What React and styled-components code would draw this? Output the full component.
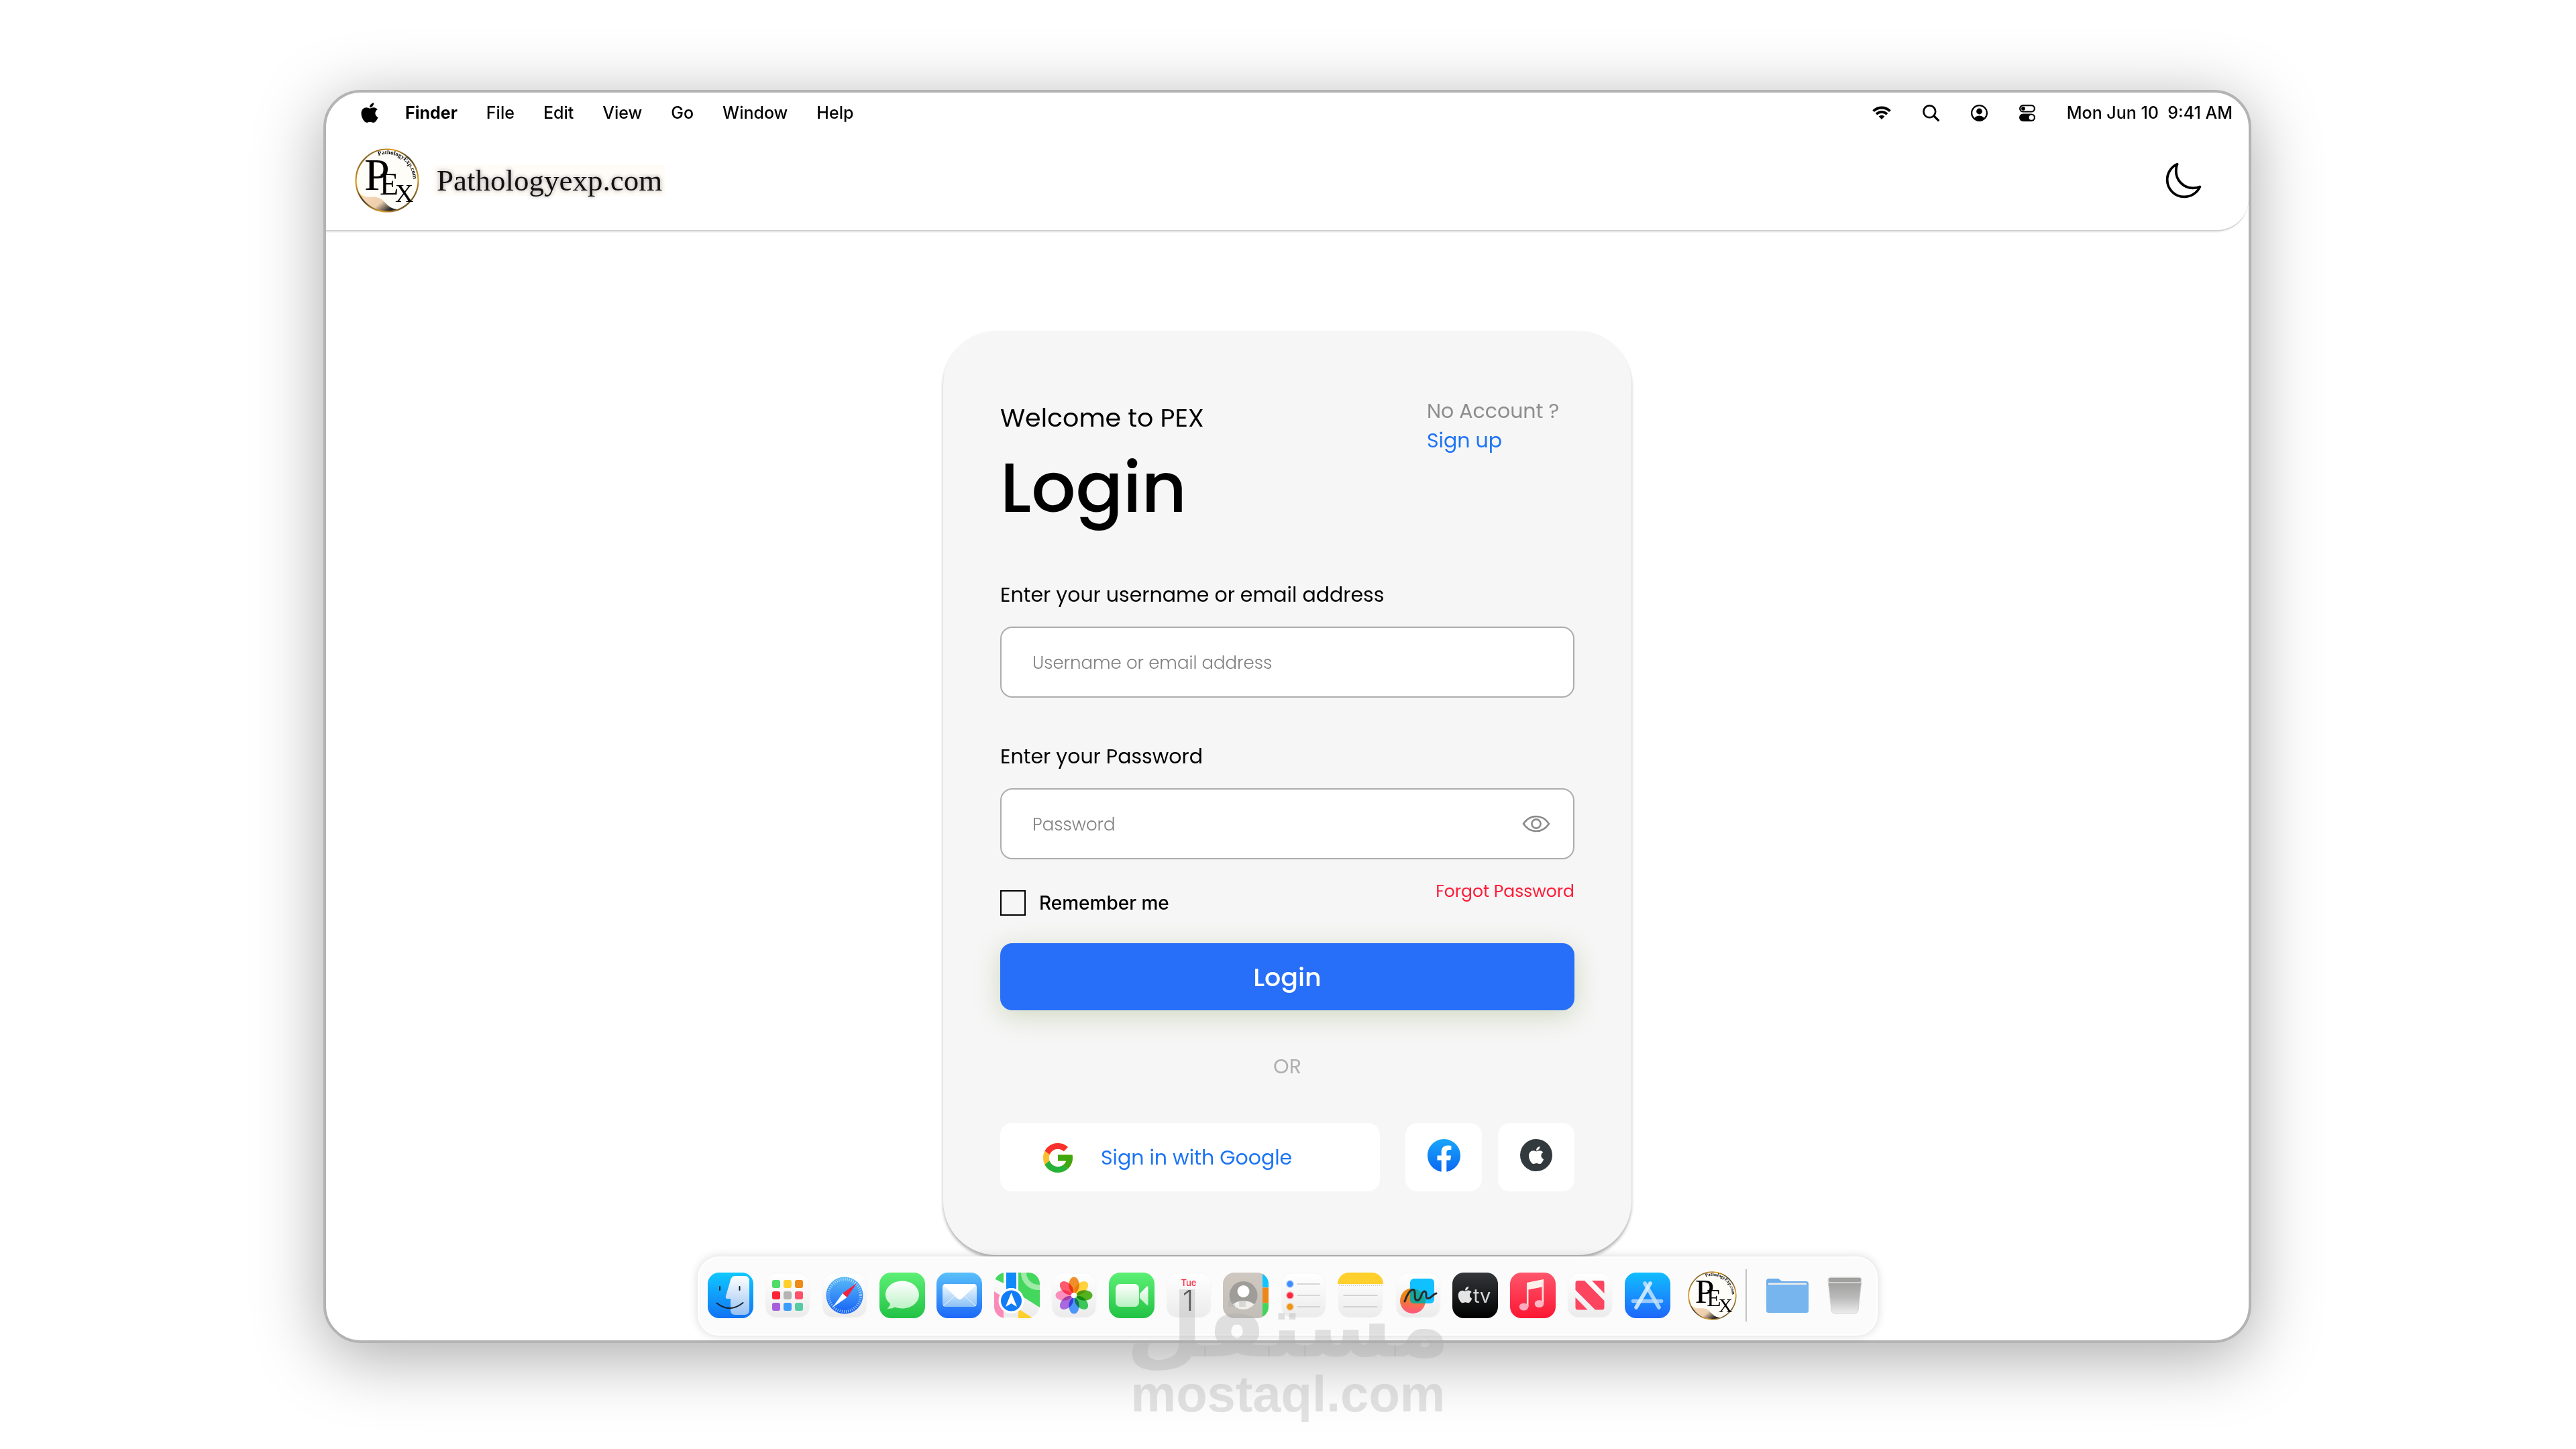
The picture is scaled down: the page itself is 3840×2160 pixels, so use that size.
import { useState } from "react";
import styled, { createGlobalStyle } from "styled-components";
import { FaApple } from "react-icons/fa6";
import { IoMoonOutline } from "react-icons/io5";

const GlobalStyle = createGlobalStyle`
    * {
        box-sizing: border-box;
    }

    body {
        margin: 0;
        background: #fff;
        color: #000;
        font-family: Poppins, Inter, sans-serif;
    }

    button {
        margin: 0;
        padding: 0;
        border: 0;
        background: none;
        color: inherit;
        font: inherit;
        cursor: pointer;
    }

    a {
        text-decoration: none;
    }

    svg {
        display: block;
        flex: none;
    }
`;

const Desktop = styled.div`
    position: relative;
    display: flex;
    min-height: 100vh;
    padding: 134px 484px 158px 482px;
    overflow: hidden;
`;

const Window = styled.div`
    flex: 1;
    display: flex;
    flex-direction: column;
    align-items: center;
    min-width: 0;
    padding-bottom: 7px;
    border: 4px solid #b3b3b3;
    border-radius: 56px;
    background: #fff;
    box-shadow: 0 20px 100px rgba(0, 0, 0, 0.34);
`;

/* menu bar */

const MenuBar = styled.div`
    align-self: stretch;
    display: flex;
    align-items: center;
    height: 62px;
    padding: 0 24px 2px 48px;
    font-family: Inter, sans-serif;
    font-size: 25px;
    font-weight: 500;
    line-height: 32px;
`;

const MenuList = styled.nav`
    display: flex;
    gap: 43px;
    margin-left: 36px;
`;

const MenuItem = styled.button`
    font-weight: ${({ $active }) => ($active ? 700 : 500)};
`;

const StatusList = styled.div`
    display: flex;
    align-items: center;
    gap: 47px;
    margin-left: auto;
`;

const Clock = styled.time`
    white-space: pre;
`;

/* site header */

const Header = styled.header`
    align-self: stretch;
    display: flex;
    align-items: center;
    gap: 22px;
    padding: 21px 67px 26px 43px;
    border-bottom: 2px solid #cfcfcf;
    border-bottom-right-radius: 48px;
    box-shadow: 0 2px 1px rgba(0, 0, 0, 0.04);
`;

const SiteName = styled.a`
    padding: 0 4px;
    background: #fffbf7;
    color: #111;
    font-family: "Liberation Serif", serif;
    font-size: 45px;
    line-height: 46px;
    text-shadow: 0 0 6px rgba(0, 0, 0, 0.4);
`;

const ThemeToggle = styled.button`
    margin-left: auto;
`;

/* login card */

const Main = styled.main`
    flex: 1;
    padding-top: 148px;
`;

const Card = styled.form`
    width: 1026px;
    max-width: 100%;
    padding: 98px 85px 95px;
    border-radius: 80px;
    background: #f6f6f6;
    box-shadow: 0 4px 4px rgba(0, 0, 0, 0.3);
`;

const CardTop = styled.div`
    display: flex;
    justify-content: space-between;
    margin-bottom: 68px;
`;

const Welcome = styled.p`
    margin: 0;
    font-size: 38px;
    line-height: 64px;
`;

const Title = styled.h1`
    margin: 0;
    font-size: 104px;
    font-weight: 500;
    line-height: 144px;
`;

const Aside = styled.div`
    display: flex;
    flex-direction: column;
    width: 220px;
    color: #8d8d8d;
    font-size: 30px;
    line-height: 44px;
`;

const TextLink = styled.a`
    color: #1c74f5;
`;

const Field = styled.div`
    margin-bottom: ${({ $last }) => ($last ? 28 : 68)}px;
`;

const FieldLabel = styled.label`
    display: block;
    margin-bottom: 27px;
    font-size: 30px;
    line-height: 40px;
`;

const FieldBox = styled.div`
    display: flex;
    align-items: center;
    height: 106px;
    padding: 0 34px 0 46px;
    border: 2px solid #adadad;
    border-radius: 18px;
    background: #fff;
`;

const FieldInput = styled.input`
    flex: 1;
    min-width: 0;
    padding: 2px 0 0;
    border: 0;
    outline: 0;
    background: none;
    font: 300 26px/40px Poppins, Inter, sans-serif;

    &::placeholder {
        color: #808080;
        opacity: 1;
    }
`;

const Options = styled.div`
    display: flex;
    justify-content: space-between;
    align-items: flex-start;
    margin-bottom: 41px;
`;

const Remember = styled.label`
    display: flex;
    align-items: center;
    gap: 20px;
    padding-top: 18px;
    font-family: Inter, sans-serif;
    font-size: 28px;
    font-weight: 500;
    line-height: 38px;
`;

const Checkbox = styled.input`
    appearance: none;
    width: 38px;
    height: 38px;
    margin: 0;
    border: 2px solid #000;

    &:checked {
        background: #276ef8;
    }
`;

const ForgotLink = styled.a`
    color: #ff1a36;
    font-size: 25px;
    line-height: 40px;
`;

const SubmitButton = styled.button`
    display: block;
    width: 100%;
    height: 100px;
    border-radius: 18px;
    background: #276ef8;
    box-shadow: 0 8px 38px rgba(119, 147, 65, 0.3);
    color: #fff;
    font-size: 38px;
    font-weight: 500;
`;

const Or = styled.p`
    margin: 64px 0;
    color: #b0b0b0;
    font-size: 30px;
    line-height: 40px;
    text-align: center;
`;

const SocialRow = styled.div`
    display: flex;
    gap: 38px;
`;

const SocialPair = styled.div`
    display: flex;
    gap: 24px;
`;

const SocialButton = styled.button`
    display: flex;
    align-items: center;
    justify-content: center;
    width: 114px;
    height: 102px;
    padding-bottom: 6px;
    border-radius: 18px;
    background: #fff;
`;

const GoogleButton = styled(SocialButton)`
    flex: 1;
    justify-content: flex-start;
    gap: 42px;
    padding: 2px 64px 0;
    color: #1c74f5;
    font-size: 30px;
`;

const AppleBadge = styled.span`
    display: flex;
    align-items: center;
    justify-content: center;
    width: 48px;
    height: 48px;
    border-radius: 50%;
    background: #333a3d;
    color: #fff;
`;

/* dock */

const Dock = styled.div`
    position: relative;
    display: flex;
    align-items: center;
    width: 1759px;
    max-width: 100%;
    height: 118px;
    margin-top: 2px;
    padding: 0 21px 2px 13px;
    border: 2px solid #fff;
    border-radius: 32px;
    background: #fbfbfb;
    box-shadow: 0 0 14px rgba(0, 0, 0, 0.16);
`;

const DockApps = styled.div`
    flex: 1;
    display: flex;
    justify-content: space-between;
`;

const DockSite = styled.button`
    margin: 0 13px 0 26px;
`;

const DockDivider = styled.div`
    width: 2px;
    height: 78px;
    background: #c4c4c4;
`;

const DockFiles = styled.div`
    display: flex;
    align-items: center;
    gap: 28px;
    margin-left: 29px;
`;

/* stamp that lies over the bottom of the page */

const Watermark = styled.div`
    position: absolute;
    left: 0;
    right: 0;
    bottom: 38px;
    display: flex;
    flex-direction: column;
    align-items: center;
    color: rgba(170, 170, 170, 0.34);
    font-weight: 700;
    pointer-events: none;
`;

const WatermarkArabic = styled.span`
    font-family: "DejaVu Sans", sans-serif;
    font-size: 132px;
    line-height: 116px;
`;

const WatermarkLatin = styled.span`
    font-family: "Liberation Sans", sans-serif;
    font-size: 76px;
    line-height: 88px;
`;

const menuItems = ["Finder", "File", "Edit", "View", "Go", "Window", "Help"];

const WifiIcon = () => (
    <svg width="28" height="20" viewBox="0 0 28 20">
        <g fill="none" stroke="#000" strokeWidth="3.8">
            <path d="M1.6 7.6A17.6 17.6 0 0 1 26.4 7.6" />
            <path d="M6 12.2A11.3 11.3 0 0 1 22 12.2" />
        </g>
        <path d="M14 20 9.6 15.6A6.3 6.3 0 0 1 18.4 15.6Z" />
    </svg>
);

const SearchIcon = () => (
    <svg width="25" height="25" viewBox="0 0 25 25" fill="none" stroke="#000">
        <circle cx="10.3" cy="10.3" r="8.9" strokeWidth="2.7" />
        <path d="M16.6 16.6 23.4 23.4" strokeWidth="3.4" strokeLinecap="round" />
    </svg>
);

const UserIcon = () => (
    <svg width="25" height="25" viewBox="0 0 25 25">
        <clipPath id="userClip">
            <circle cx="12.5" cy="12.5" r="11.5" />
        </clipPath>
        <circle cx="12.5" cy="12.5" r="11.4" fill="none" stroke="#000" strokeWidth="2.2" />
        <circle cx="12.5" cy="10" r="4.4" />
        <ellipse cx="12.5" cy="23" rx="8.4" ry="6.4" clipPath="url(#userClip)" />
    </svg>
);

const ControlIcon = () => (
    <svg width="24" height="25" viewBox="0 0 24 25">
        <rect x="1.1" y="1.1" width="21.8" height="9.4" rx="4.7" fill="none" stroke="#000" strokeWidth="2.2" />
        <circle cx="6" cy="5.8" r="2.9" />
        <rect y="13.4" width="24" height="11.6" rx="5.8" />
        <circle cx="18.2" cy="19.2" r="3.6" fill="#fff" />
    </svg>
);

const EyeIcon = () => (
    <svg width="42" height="26" viewBox="0 0 42 26" fill="none" stroke="#8a8a8a" strokeWidth="2.6">
        <path d="M2 13C7 5.500 13 2 21 2s14 3.500 19 11c-5 7.500-11 11-19 11S7 20.500 2 13z" />
        <circle cx="21" cy="13" r="6.600" />
    </svg>
);

const PexLogo = ({ size, id }) => (
    <svg width={size} height={size} viewBox="0 0 96 96" fontFamily="Liberation Serif, serif">
        <defs>
            <linearGradient id={`${id}Ring`} x1="0" y1="0" x2="0.9" y2="1">
                <stop offset="0" stopColor="#2b2b2b" />
                <stop offset="0.3" stopColor="#e8a21c" />
                <stop offset="0.5" stopColor="#3a3320" />
                <stop offset="0.75" stopColor="#e0a02a" />
                <stop offset="1" stopColor="#222" />
            </linearGradient>
            <linearGradient id={`${id}Wave`} x1="0" y1="0" x2="1" y2="0.6">
                <stop offset="0" stopColor="#f7b733" />
                <stop offset="0.25" stopColor="#f5d5b5" />
                <stop offset="0.65" stopColor="#eccfae" />
                <stop offset="1" stopColor="#222" />
            </linearGradient>
            <path id={`${id}Arc`} d="M35 11A39 39 0 0 1 86 56" />
        </defs>
        <circle cx="48" cy="48" r="46.500" fill="#fffdf8" />
        <path d="M5 66C16 77 24 70 36 74C46 78 48 90 64 91A46.500 46.500 0 0 1 5 66Z" fill={`url(#${id}Wave)`} />
        <circle cx="48" cy="48" r="46.500" fill="none" stroke={`url(#${id}Ring)`} strokeWidth="2.200" />
        <text x="14" y="62" fontSize="68">P</text>
        <text x="37" y="69" fontSize="46">E</text>
        <text x="60" y="80" fontSize="38">X</text>
        <text fontSize="9" fontWeight="700">
            <textPath href={`#${id}Arc`}>PathologyExp.com</textPath>
        </text>
    </svg>
);

const GoogleIcon = () => (
    <svg width="44" height="44" viewBox="4 4 40 40">
        <path fill="#fbc02d" d="M43.611,20.083H42V20H24v8h11.303c-1.649,4.657-6.080,8-11.303,8c-6.627,0-12-5.373-12-12c0-6.627,5.373-12,12-12c3.059,0,5.842,1.154,7.961,3.039l5.657-5.657C34.046,6.053,29.268,4,24,4C12.955,4,4,12.955,4,24c0,11.045,8.955,20,20,20c11.045,0,20-8.955,20-20C44,22.659,43.862,21.350,43.611,20.083z" />
        <path fill="#f8302e" d="M6.306,14.691l6.571,4.819C14.655,15.108,18.961,12,24,12c3.059,0,5.842,1.154,7.961,3.039l5.657-5.657C34.046,6.053,29.268,4,24,4C16.318,4,9.656,8.337,6.306,14.691z" />
        <path fill="#25b33c" d="M24,44c5.166,0,9.860-1.977,13.409-5.192l-6.190-5.238C29.211,35.091,26.715,36,24,36c-5.202,0-9.619-3.317-11.283-7.946l-6.522,5.025C9.505,39.556,16.227,44,24,44z" />
        <path fill="#3fa80f" d="M43.611,20.083H42V20H24v8h11.303c-0.792,2.237-2.231,4.166-4.087,5.571l6.193,5.237C36.971,39.205,44,34,44,24C44,22.659,43.862,21.350,43.611,20.083z" />
    </svg>
);

const FacebookIcon = () => (
    <svg width="49" height="49" viewBox="8 8 496 496">
        <linearGradient id="facebook" x1="0" y1="0" x2="0" y2="1">
            <stop offset="0" stopColor="#18a6fb" />
            <stop offset="1" stopColor="#0a68f2" />
        </linearGradient>
        <path fill="url(#facebook)" d="M504 256C504 119 393 8 256 8S8 119 8 256c0 123.780 90.690 226.380 209.250 245V327.690h-63V256h63v-54.640c0-62.150 37-96.480 93.670-96.480 27.140 0 55.520 4.840 55.520 4.840v61h-31.280c-30.800 0-40.410 19.120-40.410 38.730V256h68.780l-11 71.690h-57.780V501C413.310 482.380 504 379.780 504 256z" />
    </svg>
);

const tileColors = {
    white: ["#ffffff", "#ebebeb"],
    sky: ["#0fc8ff", "#1272f4"],
    green: ["#5cf075", "#22c244"],
    mail: ["#5ac0fa", "#1c68f8"],
    black: ["#34373a", "#000000"],
    red: ["#ff566c", "#fb1732"],
    store: ["#10bdff", "#1f66fa"],
    tan: ["#cfc8c0", "#c2beb8"],
};

// Rounded square that every app icon is drawn on.
const Tile = ({ name, color = "white", children }) => {
    const [from, to] = tileColors[color];
    const white = color === "white";
    return (
        <svg width="68" height="68" viewBox="0 0 68 68">
            <defs>
                <linearGradient id={`tile${name}`} x1="0" y1="0" x2="0" y2="1">
                    <stop offset="0" stopColor={from} />
                    <stop offset="1" stopColor={to} />
                </linearGradient>
                <clipPath id={`clip${name}`}>
                    <rect width="68" height="68" rx="17" />
                </clipPath>
            </defs>
            <rect
                x={white ? 1 : 0}
                y={white ? 1 : 0}
                width={white ? 66 : 68}
                height={white ? 66 : 68}
                rx={white ? 16 : 17}
                fill={`url(#tile${name})`}
                stroke={white ? "#f6f6f6" : "none"}
            />
            <g clipPath={`url(#clip${name})`}>{children}</g>
        </svg>
    );
};

const Finder = () => (
    <Tile name="Finder" color="sky">
        <linearGradient id="finderFace" x1="0" y1="0" x2="0" y2="1">
            <stop offset="0" stopColor="#fff" />
            <stop offset="1" stopColor="#98c2f2" />
        </linearGradient>
        <path d="M41 5h14q7 0 7 8v42q0 8-7 8H41q-7 0-7-7V39h-5q-3 0-2-4l7-24q1.500-6 7-6z" fill="url(#finderFace)" />
        <g fill="none" stroke="#15202c" strokeWidth="2" strokeLinecap="round">
            <path d="M18 21v5M47.500 21v5" />
            <path d="M13.500 45.500Q33 61 52.500 45" />
        </g>
    </Tile>
);

const padColors = ["#4fdc68", "#ffcf2c", "#ee8a18", "#fb2236", "#b4b4b4", "#ff5069", "#a65fdc", "#3b9dfb", "#55cba4"];

const Launchpad = () => (
    <Tile name="Launchpad">
        {padColors.map((fill, i) => (
            <rect key={fill} x={11 + (i % 3) * 17} y={11 + Math.floor(i / 3) * 17} width="12" height="12" rx="3" fill={fill} />
        ))}
    </Tile>
);

const Safari = () => (
    <Tile name="Safari">
        <linearGradient id="safariDial" x1="0" y1="0" x2="0" y2="1">
            <stop offset="0" stopColor="#5bbcf8" />
            <stop offset="1" stopColor="#1460f4" />
        </linearGradient>
        <circle cx="34" cy="34" r="27.500" fill="url(#safariDial)" />
        <circle cx="34" cy="34" r="24" fill="none" stroke="#d3e8fd" strokeWidth="4" strokeDasharray="0.800 2.340" />
        <path d="M52 16 37.500 37 31 31z" fill="#fb1f38" />
        <path d="M16 52 31 31 37.500 37z" fill="#fff" />
    </Tile>
);

const Messages = () => (
    <Tile name="Messages" color="green">
        <linearGradient id="bubble" x1="0" y1="0" x2="0" y2="1">
            <stop offset="0" stopColor="#fff" />
            <stop offset="1" stopColor="#bdf2c6" />
        </linearGradient>
        <path d="M34 12.500c14 0 25 9 25 20.500s-11 20.500-25 20.500c-4 0-8-.700-11-2q-5 3-11.500 2 4-3 4.500-7c-4.500-3.500-7-8.500-7-13.500 0-11.500 11-20.500 25-20.500z" fill="url(#bubble)" />
    </Tile>
);

const Mail = () => (
    <Tile name="Mail" color="mail">
        <linearGradient id="letter" x1="0" y1="0" x2="0" y2="1">
            <stop offset="0" stopColor="#f4faff" />
            <stop offset="1" stopColor="#8cc2f6" />
        </linearGradient>
        <rect x="9" y="17" width="51" height="34" rx="4.500" fill="url(#letter)" />
        <path d="M10 50 28 34M59 50 41 34" stroke="#eaf5ff" strokeWidth="1" />
        <path d="M10 18.500Q11 17 13.500 17h42q2.500 0 3.500 1.500L38 38.500q-3.500 3-7 0z" fill="#fff" />
    </Tile>
);

const Maps = () => (
    <Tile name="Maps">
        <path d="M0 0h14v16L0 9z" fill="#44d75e" />
        <path d="M18 0h15v30H18z" fill="#108af8" />
        <path d="M36 0h32v52L36 32z" fill="#44d75e" />
        <circle cx="66" cy="0" r="22" fill="none" stroke="#a0eaa8" strokeWidth="8" />
        <path d="M0 28 14 37v31H0z" fill="#fb8ab8" />
        <path d="M36 54 58 68H36z" fill="#ffcf2c" />
        <circle cx="25.500" cy="42" r="19" fill="#fff" />
        <circle cx="25.500" cy="42" r="15.500" fill="#127bf6" />
        <path d="m25.500 30 8.500 21-8.500-5-8.500 5z" fill="#fff" />
    </Tile>
);

const petals = ["#ee8618", "#ffcf2c", "#43ab0d", "#2cc24b", "#3f8dfb", "#a35cdb", "#fb86b8", "#ff4c63"];

const Photos = () => (
    <Tile name="Photos">
        <g style={{ isolation: "isolate" }}>
            {petals.map((fill, i) => (
                <ellipse
                    key={fill}
                    cx="34"
                    cy="18.500"
                    rx="7.800"
                    ry="12"
                    fill={fill}
                    fillOpacity="0.920"
                    transform={`rotate(${i * 45} 34 34)`}
                    style={{ mixBlendMode: "multiply" }}
                />
            ))}
        </g>
        <circle cx="34" cy="34" r="4" fill="#fff" />
    </Tile>
);

const FaceTime = () => (
    <Tile name="FaceTime" color="green">
        <linearGradient id="camera" x1="0" y1="0" x2="0" y2="1">
            <stop offset="0" stopColor="#fff" />
            <stop offset="1" stopColor="#b9f1c2" />
        </linearGradient>
        <rect x="10" y="17" width="35" height="34" rx="6.500" fill="url(#camera)" />
        <path d="M46 31.500 56 21q2.500-2 2.500 1v25q0 3-2.500 1L46 38z" fill="url(#camera)" />
    </Tile>
);

const Calendar = () => (
    <Tile name="Calendar">
        <text x="34" y="20" textAnchor="middle" fontFamily="Inter, sans-serif" fontSize="13" fontWeight="500" fill="#fb2c42">Tue</text>
        <text x="33" y="57" textAnchor="middle" fontFamily="Inter, sans-serif" fontSize="42" fontWeight="300" fill="#333">1</text>
    </Tile>
);

const Contacts = () => (
    <Tile name="Contacts" color="tan">
        <clipPath id="contactClip">
            <circle cx="30.500" cy="34" r="21" />
        </clipPath>
        <path d="M59 0h9v22h-9z" fill="#10c4ff" />
        <path d="M59 22.500h9V45h-9z" fill="#ec8818" />
        <path d="M59 45.500h9V68h-9z" fill="#40d65a" />
        <circle cx="30.500" cy="34" r="21" fill="#9f9d98" />
        <circle cx="30.500" cy="28" r="9" fill="#fff" />
        <ellipse cx="30.500" cy="54" rx="19" ry="12" fill="#f0efec" clipPath="url(#contactClip)" />
    </Tile>
);

const Reminders = () => (
    <Tile name="Reminders">
        {["#3f8dfb", "#fb2840", "#ee9418"].map((fill, i) => (
            <g key={fill}>
                <circle cx="14" cy={17 + i * 17} r="6" fill={fill} fillOpacity="0.300" />
                <circle cx="14" cy={17 + i * 17} r="4.500" fill={fill} />
                <path d={`M24.500 ${17 + i * 17}h34`} stroke="#cbcbcb" strokeWidth="1.600" />
            </g>
        ))}
    </Tile>
);

const Notes = () => (
    <Tile name="Notes">
        <path d="M0 0h68v17H0z" fill="#ffcf2c" />
        <path d="M2 19h64" stroke="#b9a88c" strokeWidth="1.200" strokeDasharray="1.200 1.800" />
        <path d="M8.500 34h51M8.500 51h51" stroke="#c8c8c8" strokeWidth="1.600" />
    </Tile>
);

const Freeform = () => (
    <Tile name="Freeform">
        <linearGradient id="ball" x1="0" y1="0" x2="0" y2="1">
            <stop offset="0.300" stopColor="#ee8618" />
            <stop offset="1" stopColor="#ff5580" />
        </linearGradient>
        <circle cx="26" cy="42" r="19" fill="url(#ball)" />
        <rect x="22" y="9" width="36" height="37" rx="6" fill="#10c0ff" />
        <path d="M22 25q15-4 23 16v5H28q-6 0-6-6z" fill="#17a080" fillOpacity="0.800" />
        <path d="M14 43C17 34 22 25 26.500 25.500 32 26 26 42 33 41.500 40 40 38 27.500 43.500 28 49 28.500 43 38.500 48.500 38.500 54 38.500 56 32 61 31" fill="none" stroke="#2a2a2a" strokeWidth="3" strokeLinecap="round" />
    </Tile>
);

const AppleTv = () => (
    <Tile name="AppleTv" color="black">
        <FaApple x="5" y="19" size="28" color="#e4e4e4" />
        <text x="31" y="45" fontFamily="Inter, sans-serif" fontSize="29" fill="#d8d8d8">tv</text>
    </Tile>
);

const Music = () => (
    <Tile name="Music" color="red">
        <path d="M25 15 50 10v11L25 26z" fill="#fbf1ea" />
        <path d="M26.200 20v31M48.800 15v31" stroke="#fde3e0" strokeWidth="2.600" />
        <ellipse cx="20.500" cy="51" rx="6.800" ry="5.600" fill="#fda9bd" />
        <ellipse cx="43.500" cy="46.500" rx="6.800" ry="5.600" fill="#fdb6c4" />
    </Tile>
);

const News = () => (
    <Tile name="News">
        <g fill="#fd4560">
            <path d="M16 12h10l29.500 30v10q0 3.500-3.500 3.500H42L12.500 26V15.500Q12.500 12 16 12z" />
            <path d="M12.500 37 30.500 55.500H16q-3.500 0-3.500-3.500z" />
            <path d="M37 12h15q3.500 0 3.500 3.500V31z" />
        </g>
    </Tile>
);

const AppStore = () => (
    <Tile name="AppStore" color="store">
        <g fill="none" strokeLinecap="round" strokeWidth="5.600">
            <path d="M12.500 42.500h42" stroke="#9ccbfb" />
            <path d="m30 16 21 36" stroke="#c4e3fd" strokeOpacity="0.850" />
            <path d="M38 16 17 52" stroke="#e2f2ff" strokeOpacity="0.850" />
        </g>
    </Tile>
);

const FolderIcon = () => (
    <svg width="63" height="51" viewBox="0 0 63 51">
        <path d="M4 0h14l5 4h36q4 0 4 4v39q0 4-4 4H4q-4 0-4-4V4q0-4 4-4z" fill="#6cadea" />
        <path d="M3 6.500h57V12H3z" fill="#eee" />
        <path d="M0 12q0-3 4-3h55q4 0 4 3v35q0 4-4 4H4q-4 0-4-4z" fill="#77b5ee" />
    </svg>
);

const TrashIcon = () => (
    <svg width="52" height="56" viewBox="0 0 52 56">
        <linearGradient id="bin" x1="0" y1="0" x2="0" y2="1">
            <stop offset="0.100" stopColor="#a3a3a2" />
            <stop offset="0.500" stopColor="#b9b9b9" />
            <stop offset="1" stopColor="#ededed" />
        </linearGradient>
        <path d="M1 6 6 50q1 5 6 5h28q5 0 6-5L51 6z" fill="url(#bin)" stroke="#d2d2d2" />
        <rect x="1" y="1" width="50" height="8" rx="4" fill="#a0a09f" stroke="#e2e2e2" strokeWidth="1.500" />
    </svg>
);

const dockApps = {
    Finder, Launchpad, Safari, Messages, Mail, Maps, Photos, FaceTime, Calendar,
    Contacts, Reminders, Notes, Freeform, "Apple TV": AppleTv, Music, News, "App Store": AppStore,
};

const LoginCard = () => {
    const [showPassword, setShowPassword] = useState(false);

    return (
        <Card onSubmit={(e) => e.preventDefault()}>
            <CardTop>
                <div>
                    <Welcome>Welcome to PEX</Welcome>
                    <Title>Login</Title>
                </div>
                <Aside>
                    <span>No Account ?</span>
                    <TextLink href="#signup">Sign up</TextLink>
                </Aside>
            </CardTop>

            <Field>
                <FieldLabel htmlFor="username">Enter your username or email address</FieldLabel>
                <FieldBox>
                    <FieldInput id="username" type="text" placeholder="Username or email address" />
                </FieldBox>
            </Field>
            <Field $last>
                <FieldLabel htmlFor="password">Enter your Password</FieldLabel>
                <FieldBox>
                    <FieldInput id="password" type={showPassword ? "text" : "password"} placeholder="Password" />
                    <button type="button" aria-label="Show password" onClick={() => setShowPassword(!showPassword)}>
                        <EyeIcon />
                    </button>
                </FieldBox>
            </Field>

            <Options>
                <Remember>
                    <Checkbox type="checkbox" />
                    Remember me
                </Remember>
                <ForgotLink href="#forgot">Forgot Password</ForgotLink>
            </Options>

            <SubmitButton type="submit">Login</SubmitButton>
            <Or>OR</Or>

            <SocialRow>
                <GoogleButton type="button">
                    <GoogleIcon />
                    Sign in with Google
                </GoogleButton>
                <SocialPair>
                    <SocialButton type="button" aria-label="Sign in with Facebook">
                        <FacebookIcon />
                    </SocialButton>
                    <SocialButton type="button" aria-label="Sign in with Apple">
                        <AppleBadge>
                            <FaApple size={30} />
                        </AppleBadge>
                    </SocialButton>
                </SocialPair>
            </SocialRow>
        </Card>
    );
};

const App = () => {
    return (
        <Desktop>
            <GlobalStyle />
            <Window>
                <MenuBar>
                    <FaApple size={34} />
                    <MenuList>
                        {menuItems.map((item, i) => (
                            <MenuItem key={item} $active={i === 0}>{item}</MenuItem>
                        ))}
                    </MenuList>
                    <StatusList>
                        <WifiIcon />
                        <SearchIcon />
                        <UserIcon />
                        <ControlIcon />
                        <Clock>Mon Jun 10  9:41 AM</Clock>
                    </StatusList>
                </MenuBar>

                <Header>
                    <PexLogo size={96} id="head" />
                    <SiteName href="#home">Pathologyexp.com</SiteName>
                    <ThemeToggle aria-label="Dark mode">
                        <IoMoonOutline size={60} />
                    </ThemeToggle>
                </Header>

                <Main>
                    <LoginCard />
                </Main>

                <Dock>
                    <DockApps>
                        {Object.entries(dockApps).map(([name, Icon]) => (
                            <button key={name} aria-label={name}>
                                <Icon />
                            </button>
                        ))}
                    </DockApps>
                    <DockSite aria-label="Pathologyexp.com">
                        <PexLogo size={73} id="dock" />
                    </DockSite>
                    <DockDivider />
                    <DockFiles>
                        <button aria-label="Folder"><FolderIcon /></button>
                        <button aria-label="Trash"><TrashIcon /></button>
                    </DockFiles>
                </Dock>
            </Window>

            <Watermark>
                <WatermarkArabic lang="ar">مستقل</WatermarkArabic>
                <WatermarkLatin>mostaql.com</WatermarkLatin>
            </Watermark>
        </Desktop>
    );
};

export default App;
